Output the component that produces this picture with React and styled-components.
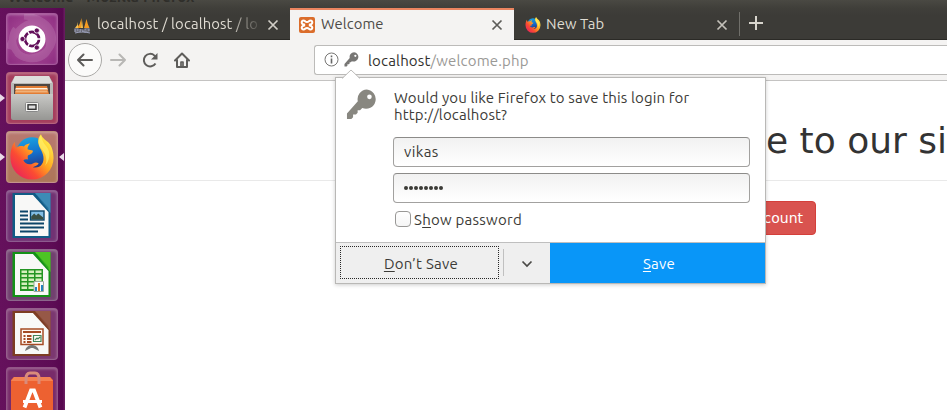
import React from 'react';
import styled, { createGlobalStyle } from 'styled-components';

const Global = createGlobalStyle`
  * { box-sizing: border-box; }
  html, body { margin: 0; padding: 0; background: #fff; overflow: hidden; }
  svg { display: block; flex: none; }
`;

const ui = `'Ubuntu', 'Noto Sans', 'Open Sans', sans-serif`;

const Desktop = styled.div`
  width: 947px; height: 410px; display: flex; flex-direction: column;
  overflow: hidden; font-family: ${ui}; color: #3c3b37; background: #fff;
`;
const TitleBar = styled.div`
  height: 8px; flex: none; overflow: hidden; padding-left: 8px;
  background: linear-gradient(#4a4943, #403f3a);
`;
const WindowTitle = styled.div`
  font-size: 15px; font-weight: 700; line-height: 20px; margin-top: -13px; color: #2f2e2a;
  white-space: nowrap; letter-spacing: .2px;
`;
const Workspace = styled.div`display: flex; flex: 1; min-height: 0;`;
const Launcher = styled.nav`
  width: 65px; flex: none; display: flex; flex-direction: column; gap: 7px;
  padding: 5px 0 0; overflow: hidden;
  background: linear-gradient(90deg, #65115c, #5d0c55 80%, #57074f 96%, #6b2063);
`;
const LaunchRow = styled.div`
  height: 52px; flex: none; display: grid; grid-template-columns: 6px 52px 7px; align-items: center;
`;
const LaunchTile = styled.div`
  width: 52px; height: 52px; border-radius: 4px; display: flex; align-items: center; justify-content: center;
  overflow: hidden; background: ${p => p.$bg};
  border: 1px solid rgba(255,255,255,.2);
  box-shadow: inset 0 1px 3px rgba(255,255,255,.32);
`;
const Browser = styled.div`flex: 1; min-width: 0; display: flex; flex-direction: column;`;
const TabStrip = styled.div`
  height: 32px; flex: none; display: flex; background: linear-gradient(#403f3a, #3c3b37 8px);
  border-bottom: 1px solid #2b2a26;
`;
const Tab = styled.div`
  width: ${p => p.$w}px; height: 32px; flex: none; display: flex; align-items: center;
  padding: 0 11px 0 ${p => p.$pad}px; gap: ${p => p.$gap}px;
  color: ${p => p.$active ? '#4c4b48' : '#dfdbd2'};
  background: ${p => p.$active ? '#f4f3f2' : 'transparent'};
  border-top: 2px solid ${p => p.$active ? '#ea8560' : 'transparent'};
`;
const TabLabel = styled.span`
  flex: 1; font-size: 14.8px; line-height: 20px; white-space: nowrap; overflow: hidden;
  letter-spacing: ${p => p.$ls || 0}px; margin-top: -2px;
  ${p => p.$fade && 'mask-image: linear-gradient(90deg, #000 80%, rgba(0,0,0,.05));'}
`;
const TabDivider = styled.div`width: 1px; height: 24px; margin-top: 4px; background: #706f6a;`;
const NewTab = styled.div`padding: 8px 9px;`;
const NavBar = styled.div`
  height: 41px; flex: none; display: flex; align-items: center; background: #f4f3f2;
  border-bottom: 1px solid #c4c3c2; padding-left: 3px;
`;
const BackButton = styled.div`
  width: 34px; height: 34px; border: 1px solid #aaa9a7; border-radius: 50%; background: #fbfbfa;
  display: flex; align-items: center; justify-content: center;
`;
const NavIcons = styled.div`display: flex; align-items: center; gap: 16px; margin-left: 8px; width: 204px;`;
const UrlBar = styled.div`
  height: 30px; flex: 1; display: flex; align-items: center; background: #fff; margin-top: -1px;
  border: 1px solid #bcbbb9; border-right: 0; border-radius: 3px 0 0 3px; padding-left: 9px; gap: 5px;
`;
const Address = styled.span`
  margin-left: 4px; font-size: 15px; line-height: 20px; letter-spacing: .17px; color: #9a9996; margin-top: 2px;
  b { font-weight: 400; color: #32312e; }
`;
const Page = styled.main`flex: 1; min-height: 0; background: #fff; padding-top: 39px; overflow: hidden;`;
const Heading = styled.h1`
  margin: 0; padding-left: 701px; height: 61px; border-bottom: 1px solid #e9e9e9;
  font: 400 36px/42px 'DejaVu Sans', sans-serif; color: #333; white-space: nowrap;
`;
const PageActions = styled.div`display: flex; padding: 20px 131px 0 0; justify-content: flex-end;`;
const DangerButton = styled.div`
  height: 34px; width: 90px; padding: 6px 12px; text-align: right; color: #fff; background: #d9534f;
  border: 1px solid #d43f3a; border-radius: 4px; font: 14px/20px 'DejaVu Sans', sans-serif;
`;
const Popup = styled.section`
  position: absolute; left: 335px; top: 77px; width: 431px; height: 207px; background: #fff;
  border: 1px solid #b9b8b6; box-shadow: 0 1px 4px rgba(0,0,0,.2);
  display: flex; flex-direction: column;
`;
const PopupArrow = styled.svg`position: absolute; left: 4px; top: -9px;`;
const PopupBody = styled.div`height: 164px; display: flex; padding: 11px 15px 0 10px;`;
const Form = styled.div`margin-left: 16px; flex: 1;`;
const Question = styled.p`
  margin: 0 0 14px; font-size: 15px; line-height: 17px; letter-spacing: .14px; white-space: nowrap; padding-left: 1px;
`;
const Field = styled.div`
  height: 30px; width: 357px; border: 1px solid #a2a19f; border-top-color: #8c8b89; border-radius: 4px;
  padding: 0 10px 2px; margin-bottom: 6px; background: linear-gradient(#f1f1f1, #fff);
  display: flex; align-items: center; font-size: 15px; letter-spacing: .4px;
`;
const Dots = styled.div`display: flex; gap: 1px; padding-top: 2px;`;
const Dot = styled.i`width: 4px; height: 4px; border-radius: 50%; background: #3c3b37;`;
const CheckRow = styled.div`
  display: flex; align-items: center; gap: 3px; padding-left: 2px; height: 20px; font-size: 15px; letter-spacing: .26px;
  u { text-underline-offset: 2px; }
`;
const Checkbox = styled.div`
  width: 16px; height: 16px; border: 1px solid #999896; border-radius: 4px; background: linear-gradient(#fff, #f5f5f5);
`;
const Footer = styled.div`
  height: 41px; display: flex; background: #efefef; border-top: 1px solid #bfbfbf; font-size: 15px; letter-spacing: .26px;
  u { text-underline-offset: 2px; }
`;
const Decline = styled.div`
  width: 159px; height: 33px; margin: 3px 4px; border: 1px dotted #282828;
  display: flex; align-items: center; justify-content: center; padding: 2px 0 0 3px;
`;
const Split = styled.div`width: 1px; height: 27px; margin-top: 6px; background: #c0c0c0;`;
const More = styled.div`width: 46px; display: flex; align-items: center; justify-content: center; padding-top: 2px;`;
const Confirm = styled.div`
  flex: 1; background: #0996f8; color: #fff; display: flex; align-items: center; justify-content: center;
  padding: 1px 0 0 3px;
`;

const Cross = ({ color }) => (
  <svg width="12" height="12" viewBox="0 0 12 12" stroke={color} strokeWidth="1.7"><path d="M1.5 1.5l9 9M10.5 1.5l-9 9" /></svg>
);
const Key = ({ size, color }) => (
  <svg width={size} height={size} viewBox="0 0 32 32">
    <path fill={color} fillRule="evenodd" d="M21.5.5a10 10 0 0 0-9.300 12.200L1 25.400V31h4.500l1.800-1.800v-3h3l1.700-1.700v-2.500h2.500l2.300-2.300A10 10 0 1 0 21.500.5zm2.700 5.200a2.400 2.400 0 1 1 0 4.800 2.400 2.400 0 0 1 0-4.800z" />
  </svg>
);
const FirefoxMark = ({ size, id }) => (
  <svg width={size} height={size} viewBox="0 0 48 48">
    <defs>
      <linearGradient id={id + 'a'} x1=".9" y1=".1" x2=".1" y2=".9">
        <stop offset="0" stopColor="#fff04b" /><stop offset=".42" stopColor="#ffa51f" />
        <stop offset=".7" stopColor="#fb4b33" /><stop offset="1" stopColor="#e9235b" />
      </linearGradient>
      <linearGradient id={id + 'b'} x1=".4" y1="0" x2=".6" y2="1">
        <stop offset="0" stopColor="#19a2e0" /><stop offset=".5" stopColor="#1470cc" /><stop offset="1" stopColor="#273482" />
      </linearGradient>
    </defs>
    <circle cx="24" cy="20" r="16.500" fill={`url(#${id}b)`} />
    <path fill={`url(#${id}a)`} d="M6 8c0 3 .6 5 1.500 6.500 2.500-2 5-2.500 8-1.500 2-2 4-3 6.500-3-2 2-2.800 4-2.600 6 1.500 1 4 .8 5.600 1.400-.2 2.800-3 3.800-5.200 5-.6 1.400-.2 3.100.1 4.200-2-.5-3.700-.3-4.900.7 2 4.300 6.200 5.200 10 3.400 2.200-1 4-1.300 6 .2-1.100 2.100-4 2.700-6.200 3.800 8 1.500 12-4 11.100-11-.4-3.200-2-6.600-3.300-8.700-3-5.200-3-10.800.8-14.700 1 4.300 5.700 6.300 8.400 9.300 3 3.200 4.700 9.500 4.700 15.400A22.500 22.500 0 0 1 1.500 25C1.200 18 3.200 11.500 6 8z" />
    <path fill="#fff46b" opacity=".65" d="M33.500 1c-4 6-3 10 .2 14.300 5 5 6.800 12 4 17.700 7-8.500 4.800-16.600.1-21.600-2-2.200-4-7-4.300-10.400z" />
  </svg>
);
const UbuntuMark = () => (
  <svg width="50" height="50" viewBox="0 0 50 50" fill="none">
    <g stroke="#fff" strokeWidth="7" opacity=".13">
      <path d="M2 35C9 8 37-2 42 22S22 50 10 39" /><path d="M17 2c31 2 38 31 15 40S0 26 9 15" />
    </g>
    <circle cx="25" cy="25" r="13.500" fill="#fff" />
    <circle cx="25" cy="25" r="7" stroke="#63105b" strokeWidth="2.800" />
    <g stroke="#fff" strokeWidth="1.500"><path d="M25 25h10M25 25l-5-9M25 25l-5 9" /></g>
    <circle cx="25" cy="25" r="5.400" fill="#fff" />
    <g fill="#63105b" stroke="#fff" strokeWidth=".8"><circle cx="15.500" cy="25" r="2.600" /><circle cx="29.800" cy="16.500" r="2.600" /><circle cx="29.800" cy="33.500" r="2.600" /></g>
  </svg>
);
const FilesMark = () => (
  <svg width="50" height="50" viewBox="0 0 50 50">
    <defs><linearGradient id="cab" x2="0" y2="1"><stop stopColor="#c9c9c6" /><stop offset="1" stopColor="#969693" /></linearGradient></defs>
    <path fill="#b9b9b6" d="M8 3h34l4 7v11H4V10z" /><path fill="#dededc" d="M8 3h34l3 7H5z" />
    <path fill="#4e4742" d="M7 11h36v10H7z" /><path fill="#e27d35" d="M9 13h31l2 8H8z" />
    <path fill="#fff3df" d="M9 15h31l1 1.500H8z" /><path fill="#f0b178" d="M9 17.500h31l1 2H8z" />
    <path fill="url(#cab)" d="M4 21h42v24q0 2-2 2H6q-2 0-2-2z" />
    <rect x="18.500" y="29.500" width="13" height="9" rx="1" fill="#f3f3f1" stroke="#888" />
    <rect x="21" y="31.800" width="8" height="4.500" fill="#ddd" stroke="#333" strokeWidth="1.400" />
  </svg>
);
const DocShape = ({ c, light, children }) => (
  <svg width="50" height="50" viewBox="0 0 50 50">
    <path fill={c} d="M5.500 2h38v45h-38z" /><path fill={light} opacity=".65" d="M28 2h15.500v20z" />
    <path fill="#f8f8f7" d="M8 4h18l15.500 17v24H8z" />
    <path fill={c} opacity=".5" d="M26 4h4l11.500 13v4z" />
    {children}
  </svg>
);
const WriterMark = () => (
  <DocShape c="#105b86" light="#55a6d0">
    <path stroke="#0c4569" strokeWidth="2" d="M13 20.500h8M13 24.500h8M13 28.500h8M13 32.500h24M13 36.500h24M13 40.500h18" />
    <rect x="23.500" y="20" width="13.500" height="9" fill="#82bde4" stroke="#0c4569" strokeWidth="1.400" />
    <path fill="#394e42" d="M24.200 28.500v-3l3-3 2 2 2-2 5 4v2z" />
  </DocShape>
);
const CalcMark = () => (
  <DocShape c="#149117" light="#6be02c">
    <path fill="#249524" d="M13 19h23v22H13z" />
    <path fill="#d5efbe" d="M14.500 20.500h5.500V23h-5.500zm7 0H27V23h-5.500zm7 0h6V23h-6zM14.500 24.500h5.500V27h-5.500zm7 0H27V27h-5.500zm7 0h6V27h-6zM14.500 28.500h5.500V31h-5.500zm7 0H27V31h-5.500zm7 0h6V31h-6zM14.500 32.500h5.500V35h-5.500zm7 0H27V35h-5.500zM14.500 36.500h5.500V39h-5.500zm7 0H27V39h-5.500z" />
    <path fill="#f7faf7" stroke="#99a99a" d="M27 31.500h9.500v10H27z" />
    <path fill="#2382bf" d="M28 37h2v4h-2zm6-2h2v6h-2z" /><path fill="#dc7326" d="M31 33h2v8h-2z" />
  </DocShape>
);
const ImpressMark = () => (
  <DocShape c="#7d3c23" light="#a4675a">
    <rect x="14" y="20" width="22" height="15.500" fill="#fff9f3" stroke="#a54b24" strokeWidth="1.500" />
    <path stroke="#a54b24" strokeWidth="2" d="M16 23h18M16.500 27h2M20 27h4.500M16.500 30h2M20 30h4.500M16.500 33h2M20 33h4.500" />
    <path fill="none" stroke="#42845a" strokeWidth="1.200" d="M26.500 26.500h7.500v6h-7.500zM28 31l2-2 1 1 2-2" />
    <path fill="#777" d="M18 42q1-5 6-6h2q5 1 6 6l-6-3h-2z" />
  </DocShape>
);
const StoreMark = () => (
  <svg width="50" height="50" viewBox="0 0 50 50">
    <path fill="#ed6131" d="M4 12l3-3h36l3 3v38H4z" /><path fill="#f48253" d="M7 9h36l3 4H4z" />
    <path fill="none" stroke="#d98b7b" strokeWidth="3" d="M19 16v-5q0-6 4-6h5q4 0 4 6v5" />
    <path fill="none" stroke="#fff" strokeWidth="3.800" d="M17.500 39.500l6.500-17h3l6.500 17" />
    <path stroke="#fff" strokeWidth="2.800" d="M16 33.500h19" />
  </svg>
);
const SailMark = () => (
  <svg width="17" height="17" viewBox="0 0 17 17">
    <path fill="#f49b22" d="M7.500 1q-1 6-4.700 10h5zM12.500 2q1 5 3 9H10z" /><path fill="#f8c453" d="M8 3l1 8H7zM4 5q0 3-3 6h3z" />
    <path fill="none" stroke="#9ca0ba" strokeWidth="1.200" d="M1 15v-3h3v2H1M6 15v-3m0 1h3v2m2 1v-4h4v2h-3M1 16q7-2 15 0" />
  </svg>
);
const XamppMark = () => (
  <svg width="16" height="16" viewBox="0 0 16 16">
    <rect width="16" height="16" rx="2" fill="#db6d2b" />
    <path fill="none" stroke="#fff" strokeWidth="2" d="M5.200 7.600C1.600 6.800 2.300 3.300 4.600 3.500 6.300 3.600 6 5 8 5s1.700-1.400 3.400-1.500c2.300-.2 3 3.300-.6 4.100v.8c3.600.8 2.900 4.300.6 4.100C9.700 12.400 10 11 8 11s-1.700 1.400-3.400 1.500c-2.300.2-3-3.300.6-4.100z" />
  </svg>
);
const Pointer = ({ back }) => (
  <svg width="6" height="8" viewBox="0 0 6 8"><path fill="#eadbe8" d={back ? 'M6 0v8L1 4z' : 'M0 0v8l5-4z'} /></svg>
);
const Arrow = ({ color, flip }) => (
  <svg width="16" height="14" viewBox="0 0 16 14" fill="none" stroke={color} strokeWidth="2" strokeLinecap="round" strokeLinejoin="round">
    <path d={flip ? 'M1 7h14M9.500 1.500L15 7l-5.500 5.500' : 'M15 7H1M6.500 1.500L1 7l5.500 5.500'} />
  </svg>
);

const apps = [
  { id: 'dash', icon: <UbuntuMark />, bg: 'radial-gradient(circle, #b1569d, #8c2b80)' },
  { id: 'files', icon: <FilesMark />, bg: '#a53d5d', left: true },
  { id: 'firefox', icon: <FirefoxMark size={46} id="dock" />, bg: 'linear-gradient(#b87970, #ad7658)', left: true, right: true },
  { id: 'writer', icon: <WriterMark />, bg: '#713273' },
  { id: 'calc', icon: <CalcMark />, bg: '#71406f' },
  { id: 'impress', icon: <ImpressMark />, bg: '#7b3770' },
  { id: 'store', icon: <StoreMark />, bg: '#782b6a' },
];

export default function App() {
  return (
    <Desktop>
      <Global />
      <TitleBar><WindowTitle>Welcome - Mozilla Firefox</WindowTitle></TitleBar>
      <Workspace>
        <Launcher>
          {apps.map(a => (
            <LaunchRow key={a.id}>
              <span>{a.left && <Pointer />}</span>
              <LaunchTile $bg={a.bg}>{a.icon}</LaunchTile>
              <span>{a.right && <Pointer back />}</span>
            </LaunchRow>
          ))}
        </Launcher>
        <Browser>
          <TabStrip>
            <Tab $w={225} $pad={9} $gap={6}><SailMark /><TabLabel $fade $ls={.14}>localhost / localhost / lo</TabLabel><Cross color="#d1cec7" /></Tab>
            <Tab $w={224} $pad={9} $gap={6} $active><XamppMark /><TabLabel $ls={.1}>Welcome</TabLabel><Cross color="#5d5c59" /></Tab>
            <Tab $w={225} $pad={11} $gap={5}><FirefoxMark size={16} id="tab" /><TabLabel $ls={.1}>New Tab</TabLabel><Cross color="#c4c1ba" /></Tab>
            <TabDivider />
            <NewTab><svg width="14" height="14" viewBox="0 0 14 14" stroke="#d7d4cc" strokeWidth="2"><path d="M7 0v14M0 7h14" /></svg></NewTab>
          </TabStrip>
          <NavBar>
            <BackButton><Arrow color="#5c5b59" /></BackButton>
            <NavIcons>
              <Arrow color="#b8b7b5" flip />
              <svg width="16" height="16" viewBox="0 0 16 16" fill="none" stroke="#5e5d5b" strokeWidth="2"><path d="M13.500 11.500A6.300 6.300 0 1 1 12.500 3.600L14 5.500" /><path fill="#5e5d5b" stroke="none" d="M15.500 1v6.500H9z" /></svg>
              <svg width="16" height="16" viewBox="0 0 16 16" fill="none" stroke="#5e5d5b" strokeWidth="2" strokeLinejoin="round" strokeLinecap="round"><path d="M1 8.500l7-7 7 7M3 8v7h10V8" /><path d="M7 14v-4h2v4" strokeWidth="1.700" /></svg>
            </NavIcons>
            <UrlBar>
              <svg width="15" height="15" viewBox="0 0 15 15"><circle cx="7.500" cy="7.500" r="6.500" fill="none" stroke="#777674" /><path stroke="#666" strokeWidth="1.600" d="M7.500 3.500v1.700M7.500 6.500v5" /></svg>
              <Key size={15} color="#777674" />
              <Address><b>localhost</b>/welcome.php</Address>
            </UrlBar>
          </NavBar>
          <Page>
            <Heading>e to our si</Heading>
            <PageActions><DangerButton>count</DangerButton></PageActions>
          </Page>
        </Browser>
      </Workspace>
      <Popup>
        <PopupArrow width="24" height="10" viewBox="0 0 24 10"><path fill="#fff" d="M2 10l9-9 9 9z" /><path fill="none" stroke="#bcbbb9" d="M2 9.500l9-8.500 9 8.500" /></PopupArrow>
        <PopupBody>
          <Key size={31} color="#888780" />
          <Form>
            <Question>Would you like Firefox to save this login for<br />http://localhost?</Question>
            <Field>vikas</Field>
            <Field><Dots>{Array.from({ length: 8 }, (_, i) => <Dot key={i} />)}</Dots></Field>
            <CheckRow><Checkbox /><span>S<u>h</u>ow password</span></CheckRow>
          </Form>
        </PopupBody>
        <Footer>
          <Decline><span><u>D</u>on’t Save</span></Decline>
          <Split />
          <More><svg width="12" height="8" viewBox="0 0 12 8" fill="none" stroke="#4a4946" strokeWidth="1.700"><path d="M1.500 1.500L6 6l4.500-4.500" /></svg></More>
          <Confirm><span><u>S</u>ave</span></Confirm>
        </Footer>
      </Popup>
    </Desktop>
  );
}
